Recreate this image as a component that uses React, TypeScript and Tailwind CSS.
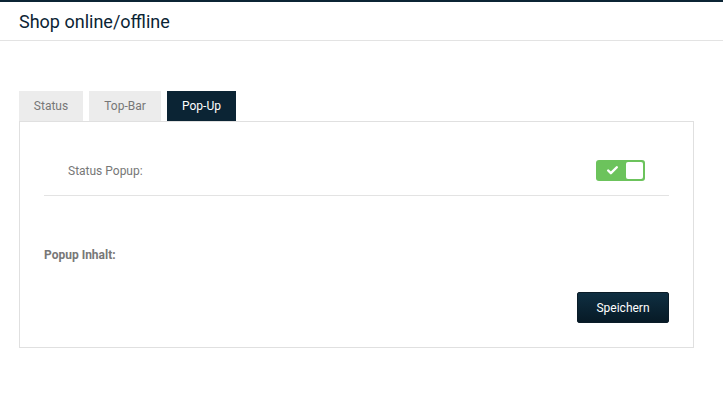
import { Check } from "lucide-react";

export default function App() {
  return (
    <div className="min-h-[393px] w-full bg-white font-['Roboto',sans-serif]">
      {/* header */}
      <div className="border-t-2 border-[#0b2434]">
        <div className="flex h-[39px] items-center border-b border-[#e3e3e3] px-[19px]">
          <h1 className="pt-[2px] text-[18px] leading-none text-[#0b2434]">Shop online/offline</h1>
        </div>
      </div>

      <div className="px-[19px] pt-[50px]">
        {/* tabs */}
        <div className="flex gap-[6px]">
          <div className="flex h-[30px] w-[64px] items-center justify-center bg-[#ececec] text-[12px] text-[#777]">Status</div>
          <div className="flex h-[30px] w-[72px] items-center justify-center bg-[#ececec] text-[12px] text-[#777]">Top-Bar</div>
          <div className="flex h-[30px] w-[69px] items-center justify-center bg-[#0b2434] text-[12px] text-white">Pop-Up</div>
        </div>

        {/* panel */}
        <div className="w-[675px] border border-[#e0e0e0] px-6 pt-[38px] pb-6">
          <div className="flex items-center justify-between border-b border-[#e3e3e3] pb-[14px] pl-6 pr-6">
            <span className="text-[12px] leading-4 text-[#777]">Status Popup:</span>
            <div className="flex h-[21px] w-[49px] items-center justify-between rounded-[3px] bg-[#6cc35c] p-[2px]">
              <div className="flex flex-1 items-center justify-center">
                <Check size={13} strokeWidth={4.5} className="text-white" />
              </div>
              <div className="h-[17px] w-[17px] rounded-[2px] bg-white" />
            </div>
          </div>

          <div className="pt-[51px] text-[12px] leading-4 font-bold text-[#777]">Popup Inhalt:</div>

          <div className="flex justify-end pt-[29px]">
            <button className="h-[31px] w-[92px] rounded-[2px] border border-[#0a1c28] bg-gradient-to-b from-[#0f2f42] to-[#071a26] text-[12px] text-white">
              Speichern
            </button>
          </div>
        </div>
      </div>
    </div>
  );
}
